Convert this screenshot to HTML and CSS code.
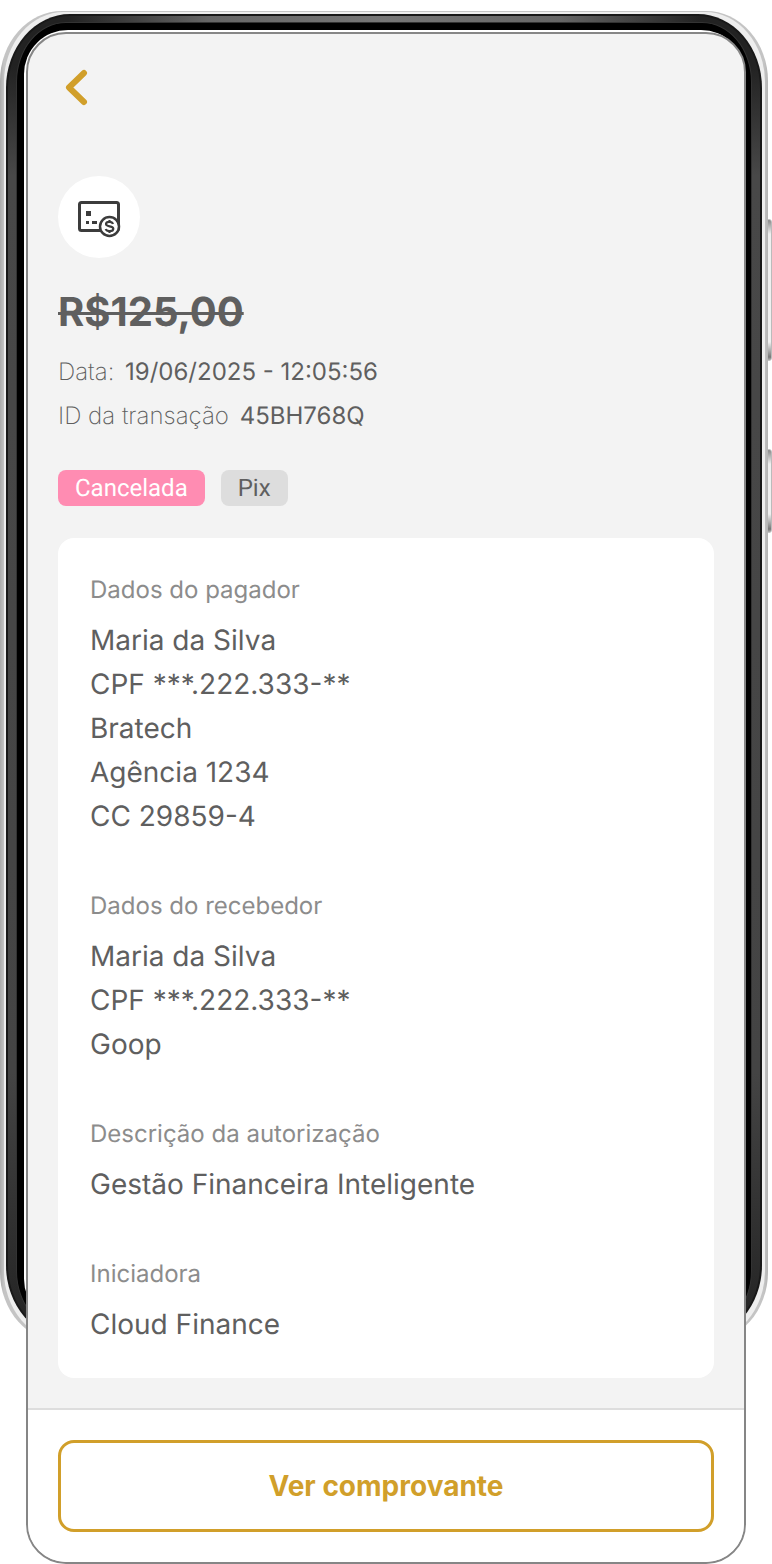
FILE: index.html
```html
<!DOCTYPE html>
<html lang="pt-BR">
<head>
    <meta charset="UTF-8">
    <meta name="viewport" content="width=device-width, initial-scale=1.0">
    <title>Detalhes da transação</title>
    <link rel="stylesheet" href="styles.css">
</head>
<body>
    <div class="phone">
        <div class="side-button volume"></div>
        <div class="side-button power"></div>
        <div class="frame">
            <div class="frame-shine"></div>
            <div class="frame-edge"></div>
            <div class="frame-metal"></div>
            <div class="frame-bezel"></div>
            <div class="frame-glass"></div>
        </div>
    </div>

    <div class="screen">
        <main>
            <button class="back-button" aria-label="Voltar">
                <svg width="24" height="38" viewBox="0 0 24 38" fill="none" stroke="#d19f2a" stroke-width="6" stroke-linecap="round" stroke-linejoin="round">
                    <path d="M20 5L5 19.500L20 34"/>
                </svg>
            </button>

            <div class="icon-circle">
                <svg width="44" height="38" viewBox="0 0 44 38" fill="none">
                    <rect x="2.500" y="4.500" width="39" height="28" rx="2" stroke="#3c3c3c" stroke-width="3"/>
                    <path d="M9 13h5v5H9zM9 23h3v3H9zM15 23h5v3h-5z" fill="#3c3c3c"/>
                    <circle cx="32.500" cy="28.500" r="9.500" fill="#fff" stroke="#3c3c3c" stroke-width="2.500"/>
                    <path d="M36 26c-.5-1.400-1.800-2.200-3.500-2.200-2 0-3.500.9-3.500 2.300 0 3.300 7.300 1.300 7.300 4.700 0 1.500-1.600 2.400-3.700 2.400-1.900 0-3.400-.8-3.900-2.200M32.500 22v2M32.500 33v2" stroke="#3c3c3c" stroke-width="2.200"/>
                </svg>
            </div>

            <h1>R$125,00</h1>
            <p class="info">Data: <span>19/06/2025 - 12:05:56</span></p>
            <p class="info">ID da transação <span>45BH768Q</span></p>

            <div class="tags">
                <span class="tag canceled">Cancelada</span>
                <span class="tag">Pix</span>
            </div>

            <div class="card">
                <section>
                    <h2>Dados do pagador</h2>
                    <p>Maria da Silva</p>
                    <p>CPF ***.222.333-**</p>
                    <p>Bratech</p>
                    <p>Agência 1234</p>
                    <p>CC 29859-4</p>
                </section>
                <section>
                    <h2>Dados do recebedor</h2>
                    <p>Maria da Silva</p>
                    <p>CPF ***.222.333-**</p>
                    <p>Goop</p>
                </section>
                <section>
                    <h2>Descrição da autorização</h2>
                    <p>Gestão Financeira Inteligente</p>
                </section>
                <section>
                    <h2>Iniciadora</h2>
                    <p>Cloud Finance</p>
                </section>
            </div>
        </main>

        <footer>
            <button class="receipt-button">Ver comprovante</button>
        </footer>
    </div>
</body>
</html>
```

FILE: styles.css
```css
* {
    box-sizing: border-box;
}

body {
    font-family: 'Inter', sans-serif;
    text-rendering: geometricPrecision;
    margin: 0;
    padding: 32px 26px 0;
    background: #fff;
    color: #5f5f5f;
    position: relative;
}

/* phone mockup behind the screen */
.phone {
    position: absolute;
    top: 11px;
    right: 4px;
    bottom: 222px;
    left: 0;
}

.frame,
.frame div {
    position: absolute;
    inset: 0;
    border-radius: 62px / 70px;
}

.frame {
    background: linear-gradient(to right, #aaa, #c4c4c4 4px, #c4c4c4 calc(100% - 4px), #b4b4b4);
}

.frame .frame-shine {
    inset: 1px 3px 1px 4px;
    background: #eee;
    border-radius: 60px / 70px;
}

.frame .frame-edge {
    inset: 3px 6px;
    background: #181818;
    border-radius: 64px / 74px;
}

.frame .frame-metal {
    inset: 5px 8px;
    background: linear-gradient(to right, transparent 30px, #222 60px, #666 200px, #777 50%, #666 calc(100% - 200px), #222 calc(100% - 60px), transparent calc(100% - 30px)) top / 100% 10px no-repeat,
        linear-gradient(#222 50px, #484848 160px, #444 80%, #222);
    border-radius: 62px / 72px;
}

.frame .frame-bezel {
    inset: 11px 16px;
    background: #000;
    border: 1px solid #333;
    border-radius: 50px / 60px;
}

.frame .frame-glass {
    inset: 19px 23px 19px 24px;
    background: #fff;
    border-radius: 44px;
}

.side-button {
    position: absolute;
    right: -4px;
    width: 6px;
    border-radius: 3px;
    background: linear-gradient(#888, #f0f0f0 14px, #f0f0f0 calc(100% - 18px), #777 calc(100% - 3px), #aaa);
    border: 1px solid #bbb;
}

.volume {
    top: 208px;
    height: 142px;
}

.power {
    top: 438px;
    height: 84px;
}

.screen {
    position: relative;
    background: #f3f3f3;
    border: 2px solid #868686;
    border-radius: 40px;
    overflow: hidden;
}

main {
    padding: 34px 30px 30px;
}

button {
    font-family: inherit;
    cursor: pointer;
}

.back-button {
    display: block;
    padding: 0 6px;
    border: none;
    background: none;
}

.back-button svg {
    display: block;
}

.icon-circle {
    display: flex;
    justify-content: center;
    align-items: center;
    width: 82px;
    height: 82px;
    margin-top: 70px;
    background: #fff;
    border-radius: 50%;
}

.icon-circle svg {
    overflow: visible;
}

h1 {
    margin: 30px 0 14px;
    font-size: 40px;
    line-height: 48px;
    font-weight: 700;
    text-decoration: line-through 3px;
}

.info {
    margin: 0;
    font-size: 24px;
    line-height: 44px;
    font-weight: 200;
}

.info span {
    font-weight: 400;
    margin-left: 4px;
}

.tags {
    display: flex;
    gap: 16px;
    margin: 32px 0;
}

.tag {
    padding: 0 17px;
    border-radius: 8px;
    background: #ddd;
    font-family: 'Roboto', sans-serif;
    font-size: 24px;
    line-height: 36px;
}

.canceled {
    background: #ff8cb2;
    color: #fff;
}

.card {
    display: flex;
    flex-direction: column;
    gap: 48px;
    padding: 32px;
    background: #fff;
    border-radius: 16px;
}

.card h2 {
    margin: 0 0 8px;
    font-size: 24px;
    line-height: 40px;
    font-weight: 400;
    color: #8c8c8c;
}

.card p {
    margin: 0;
    font-size: 28px;
    line-height: 44px;
}

footer {
    padding: 30px;
    background: #fff;
    border-top: 2px solid #ddd;
}

.receipt-button {
    display: block;
    width: 100%;
    height: 92px;
    border: 3px solid #d19f2a;
    border-radius: 16px;
    background: #fff;
    color: #d19f2a;
    font-size: 28px;
    font-weight: 700;
}
```
